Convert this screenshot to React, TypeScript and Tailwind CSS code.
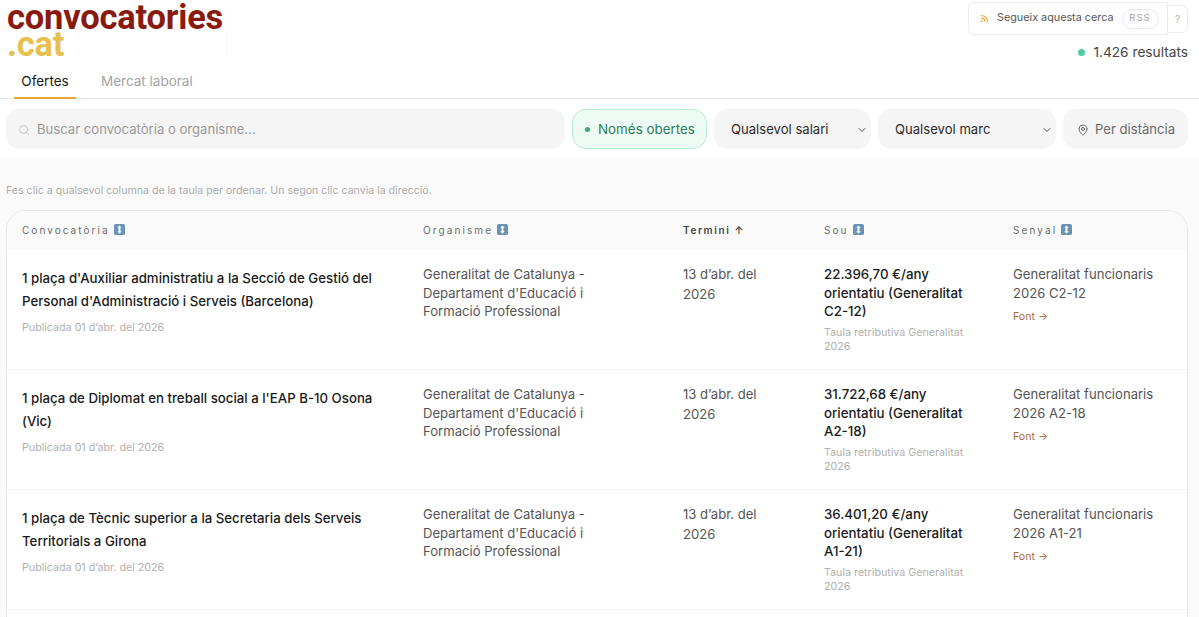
import { ChevronDown, MapPin, Rss, Search } from "lucide-react";

const rows = [
    {
        title: "1 plaça d'Auxiliar administratiu a la Secció de Gestió del Personal d'Administració i Serveis (Barcelona)",
        salary: "22.396,70 €/any orientatiu (Generalitat C2-12)",
        signal: "Generalitat funcionaris 2026 C2-12",
    },
    {
        title: "1 plaça de Diplomat en treball social a l'EAP B-10 Osona (Vic)",
        salary: "31.722,68 €/any orientatiu (Generalitat A2-18)",
        signal: "Generalitat funcionaris 2026 A2-18",
    },
    {
        title: "1 plaça de Tècnic superior a la Secretaria dels Serveis Territorials a Girona",
        salary: "36.401,20 €/any orientatiu (Generalitat A1-21)",
        signal: "Generalitat funcionaris 2026 A1-21",
    },
];

function SortEmoji() {
    return (
        <svg width="11" height="11" viewBox="0 0 12 12" className="ml-[4px] inline-block align-[-1px]">
            <rect width="12" height="12" rx="2" fill="#6b93b8" />
            <path d="M6 1.5 8.4 4H7v4h1.4L6 10.5 3.6 8H5V4H3.6Z" fill="#ffffff" />
        </svg>
    );
}

function HeaderCell({ label, first }: { label: string; first?: boolean }) {
    return (
        <th
            className={
                first
                    ? "h-[39px] pl-[15px] pr-4 text-left align-middle text-[10px] font-normal tracking-[0.205em] text-[#6b6b6b]"
                    : "h-[39px] px-4 text-left align-middle text-[10px] font-normal tracking-[0.21em] text-[#6b6b6b]"
            }
        >
            {label}
            <SortEmoji />
        </th>
    );
}

export default function App() {
    return (
        <div className="h-[617px] overflow-hidden bg-[#fafafa] font-['Inter',sans-serif] text-[#1a1a1a]">
            <header className="relative h-[99px] border-b border-[#e8e8e8] bg-white">
                <div className="flex h-full items-start justify-between">
                    <div className="flex flex-col pl-[7px] pt-[2px]">
                        <div className="h-[58px] w-[221px] border-r border-[#fafafa] font-['Roboto',sans-serif] text-[34.5px] font-bold leading-[27px] tracking-[-0.2px]">
                            <div className="pt-[2px] text-[#8a1a10]">convocatories</div>
                            <div className="text-[#e8c04f]">.cat</div>
                        </div>
                        <nav className="ml-[7px] flex text-[13.5px]">
                            <a className="mt-[2px] block h-[37px] w-[62px] border-b-2 border-[#e9a63a] pt-[9px] text-center text-[#1a1a1a]">
                                Ofertes
                            </a>
                            <a className="ml-[25px] mt-[2px] block pt-[9px] text-[#a3a3a3]">Mercat laboral</a>
                        </nav>
                    </div>
                    <div className="flex flex-col items-end pr-[11px] pt-[2px]">
                        <div className="flex items-start">
                            <div className="flex h-[33px] w-[200px] items-center rounded-l-[6px] border border-[#ececec] bg-white pl-[11px] text-[10.8px] text-[#555555]">
                                <Rss size={9} strokeWidth={3} className="text-[#eda93a]" />
                                <span className="ml-2">Segueix aquesta cerca</span>
                                <span className="ml-2 flex h-[20px] w-[37px] items-center justify-center rounded-full border border-[#e8e8e8] text-[9.5px] tracking-[0.12em] text-[#a3a3a3]">
                                    RSS
                                </span>
                            </div>
                            <div className="mt-[3px] flex h-[28px] w-[20px] items-center justify-center rounded-r-[6px] border border-l-0 border-[#ececec] text-[10px] text-[#b0b0b0]">
                                ?
                            </div>
                        </div>
                        <div className="mt-[7px] flex items-center text-[13.7px] text-[#444444]">
                            <span className="mr-[8px] h-[7px] w-[7px] rounded-full bg-[#4fd09a]" />
                            1.426 resultats
                        </div>
                    </div>
                </div>
            </header>

            <div className="flex h-[60px] items-start gap-[7px] bg-white pl-[6px] pr-[11px] pt-[10px] text-[13.1px]">
                <label className="flex h-[40px] flex-1 items-center rounded-[14px] bg-[#f5f5f5] pl-[12px] pt-px text-[#9a9a9a]">
                    <Search size={12} className="text-[#c4c4c4]" />
                    <span className="ml-[7px]">Buscar convocatòria o organisme...</span>
                </label>
                <button className="flex h-[40px] w-[135px] items-center rounded-[14px] border border-[#b5ecd0] bg-[#eefbf4] pl-[12px] pt-px text-[13.4px] text-[#2f7d5b]">
                    <span className="mr-[8px] h-[5px] w-[5px] rounded-full bg-[#3aa976]" />
                    Només obertes
                </button>
                <div className="flex h-[40px] w-[157px] items-center justify-between rounded-[14px] bg-[#f5f5f5] pl-[17px] pr-[3px] pt-px text-[#2a2a2a]">
                    Qualsevol salari
                    <ChevronDown size={12} className="text-[#555555]" />
                </div>
                <div className="flex h-[40px] w-[178px] items-center justify-between rounded-[14px] bg-[#f5f5f5] pl-[17px] pr-[3px] pt-px text-[#2a2a2a]">
                    Qualsevol marc
                    <ChevronDown size={12} className="text-[#555555]" />
                </div>
                <button className="flex h-[40px] w-[125px] items-center rounded-[14px] bg-[#f5f5f5] pl-[14px] pt-px text-[#6b6b6b]">
                    <MapPin size={12} className="text-[#666666]" />
                    <span className="ml-[6px]">Per distància</span>
                </button>
            </div>

            <main className="pl-[6px] pr-[11px]">
                <p className="mt-[25px] text-[10.6px] leading-[14px] text-[#adadad]">
                    Fes clic a qualsevol columna de la taula per ordenar. Un segon clic canvia la direcció.
                </p>
                <div className="mt-[12px] overflow-hidden rounded-t-[20px] border border-[#e8e8e8] bg-white">
                    <table className="w-full table-fixed border-separate border-spacing-0">
                        <colgroup>
                            <col className="w-[400px]" />
                            <col className="w-[260px]" />
                            <col className="w-[141px]" />
                            <col className="w-[189px]" />
                            <col />
                        </colgroup>
                        <thead className="bg-[#fafafa]">
                            <tr>
                                <HeaderCell label="Convocatòria" first />
                                <HeaderCell label="Organisme" />
                                <th className="px-4 text-left align-middle text-[10px] font-semibold tracking-[0.16em] text-[#444444]">
                                    Termini ↑
                                </th>
                                <HeaderCell label="Sou" />
                                <HeaderCell label="Senyal" />
                            </tr>
                        </thead>
                        <tbody>
                            {rows.map((row) => (
                                <tr key={row.signal} className="h-[120px] align-top [&>td]:border-b [&>td]:border-[#f2f2f2]">
                                    <td className="pl-[15px] pr-4 pt-[17px]">
                                        <div className="text-[13.25px] font-medium leading-[23px]">{row.title}</div>
                                        <div className="mt-[8px] text-[10.7px] leading-[14px] text-[#b0b0b0]">
                                            Publicada 01 d’abr. del 2026
                                        </div>
                                    </td>
                                    <td className="pl-4 pr-[60px] pt-[15px] text-[13.1px] leading-[18.5px] text-[#555555]">
                                        Generalitat de Catalunya - Departament d'Educació i Formació Professional
                                    </td>
                                    <td className="pl-4 pr-[30px] pt-[15px] text-[13.1px] leading-[19.5px] text-[#555555]">
                                        13 d’abr. del 2026
                                    </td>
                                    <td className="px-4 pt-[15px]">
                                        <div className="text-[13.3px] font-medium leading-[18.5px]">{row.salary}</div>
                                        <div className="mt-[5px] text-[10.7px] leading-[14px] text-[#b0b0b0]">
                                            Taula retributiva Generalitat 2026
                                        </div>
                                    </td>
                                    <td className="px-4 pt-[15px]">
                                        <div className="text-[13.1px] leading-[18.5px] text-[#555555]">{row.signal}</div>
                                        <a className="mt-[8px] block text-[10.6px] leading-[14px] text-[#b0683a]">Font →</a>
                                    </td>
                                </tr>
                            ))}
                            <tr className="h-[40px]">
                                <td colSpan={5} />
                            </tr>
                        </tbody>
                    </table>
                </div>
            </main>
        </div>
    );
}
